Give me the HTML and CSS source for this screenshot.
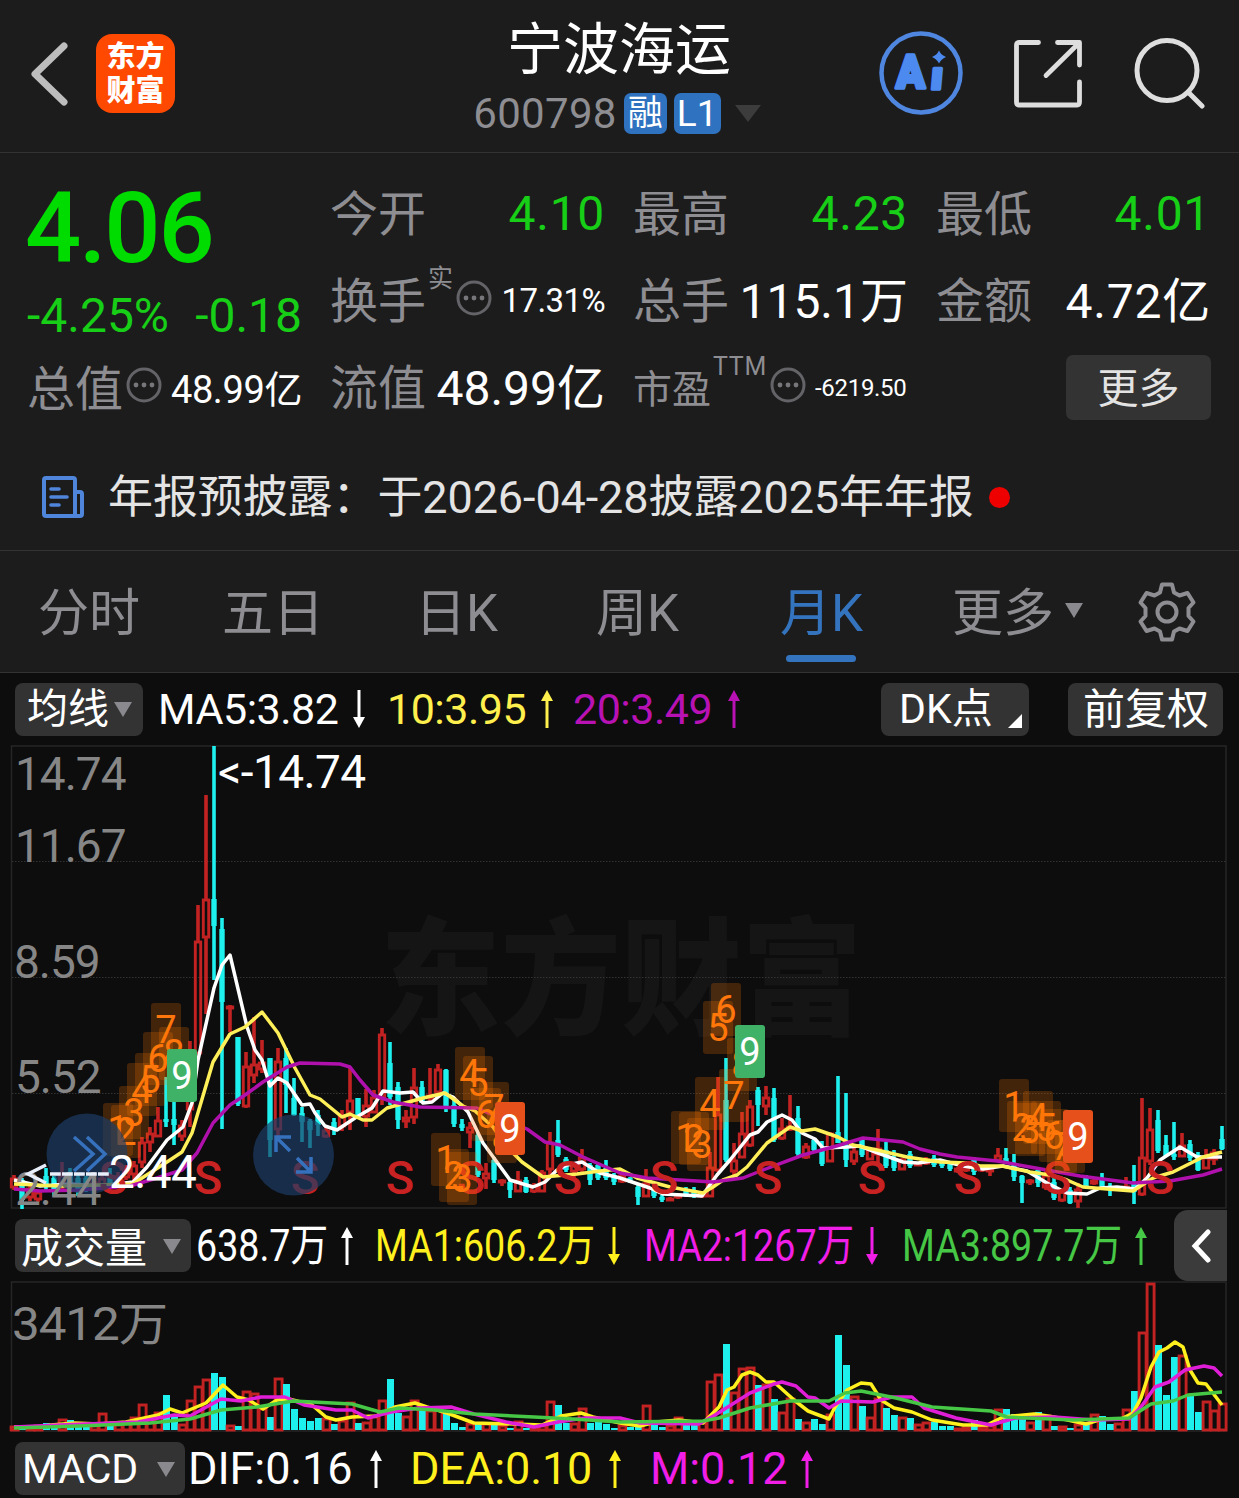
FILE: index.html
```html
<!doctype html>
<html lang="zh-CN">
  <head>
    <meta charset="utf-8">
    <meta name="viewport" content="width=device-width, initial-scale=1">
    <title>宁波海运 600798</title>
    <link rel="stylesheet" href="styles.css">
  </head>
  <body>
    <svg width="0" height="0" class="defs">
      <symbol id="arrow" viewBox="0 0 12 38">
        <path d="M6 8V38" stroke="currentColor" stroke-width="3"/>
        <path d="M6 0L12 11H0Z" fill="currentColor"/>
      </symbol>
      <symbol id="more-dots" viewBox="0 0 36 36">
        <circle cx="18" cy="18" r="16" fill="none" stroke="#646468" stroke-width="3"/>
        <circle cx="10" cy="18" r="2.4" fill="#77777b"/>
        <circle cx="18" cy="18" r="2.4" fill="#77777b"/>
        <circle cx="26" cy="18" r="2.4" fill="#77777b"/>
      </symbol>
    </svg>

    <header class="header">
      <div class="header-left">
        <svg class="back" viewBox="0 0 40 66"><path d="M35 5L6 33L35 61" fill="none" stroke="#bdbdbd" stroke-width="7" stroke-linecap="round" stroke-linejoin="round"/></svg>
        <div class="logo"><span>东方</span><span>财富</span></div>
      </div>
      <div class="header-title">
        <h1>宁波海运</h1>
        <div class="code-row">
          <span class="code">600798</span>
          <span class="tag tag-rong">融</span>
          <span class="tag tag-l1">L1</span>
          <i class="caret caret-dark"></i>
        </div>
      </div>
      <div class="header-right">
        <svg class="icon-ai" viewBox="0 0 84 84">
          <circle cx="42" cy="42" r="39.5" fill="none" stroke="#4f86e0" stroke-width="4.5"/>
          <text x="17" y="57" class="ai-a" textLength="29" lengthAdjust="spacingAndGlyphs">A</text>
          <text x="0" y="0" class="ai-i" transform="translate(51 58) skewX(-5)" textLength="12" lengthAdjust="spacingAndGlyphs">ı</text>
          <path d="M60 19.500Q62 24 67 26Q62 28 60 32.500Q58 28 53 26Q58 24 60 19.500Z" fill="#4c8af0"/>
        </svg>
        <svg class="icon-share" viewBox="0 0 70 70" fill="none" stroke="#dedede" stroke-width="4.8" stroke-linecap="round" stroke-linejoin="round">
          <path d="M25.500 4.500H6Q3.500 4.500 3.500 7V64Q3.500 67 6 67H64Q66.500 67 66.500 64V44"/>
          <path d="M44.500 4.500H66.500V27M65 6L33 37.500"/>
        </svg>
        <svg class="icon-search" viewBox="0 0 72 72" fill="none" stroke="#dedede" stroke-width="5" stroke-linecap="round">
          <circle cx="34" cy="33.500" r="30"/>
          <path d="M55 55L69 69"/>
        </svg>
      </div>
    </header>

    <section class="quote">
      <div class="price-box">
        <div class="price">4.06</div>
        <div class="change"><span>-4.25%</span><span>-0.18</span></div>
        <div class="stat stat-left"><label>总值</label><svg class="dots"><use href="#more-dots"/></svg><b class="mid">48.99亿</b></div>
      </div>
      <div class="stats">
        <div class="stat"><label>今开</label><b class="down">4.10</b></div>
        <div class="stat"><label>最高</label><b class="down">4.23</b></div>
        <div class="stat"><label>最低</label><b class="down">4.01</b></div>
        <div class="stat"><label>换手</label><sup>实</sup><svg class="dots"><use href="#more-dots"/></svg><b class="small">17.31%</b></div>
        <div class="stat"><label>总手</label><b class="cjk">115.1万</b></div>
        <div class="stat"><label>金额</label><b class="cjk wide">4.72亿</b></div>
        <div class="stat"><label>流值</label><b class="cjk">48.99亿</b></div>
        <div class="stat"><label class="short">市盈</label><sup class="ttm">TTM</sup><svg class="dots"><use href="#more-dots"/></svg><b class="tiny">-6219.50</b></div>
        <div class="stat stat-more"><button class="more">更多</button></div>
      </div>
    </section>

    <section class="notice">
      <svg class="icon-news" viewBox="0 0 42 42" fill="none" stroke="#5085dc" stroke-width="4" stroke-linejoin="round" stroke-linecap="round">
        <path d="M33 40H4Q2 40 2 38V4Q2 2 4 2H31Q33 2 33 4V40H38Q40 40 40 38V18Q40 16 38 16H33"/>
        <path d="M9 13H17M9 21H25M9 29H17" stroke-width="3.600"/>
      </svg>
      <span class="notice-text">年报预披露：于2026-04-28披露2025年年报</span>
      <i class="red-dot"></i>
    </section>

    <nav class="tabs">
      <a>分时</a>
      <a>五日</a>
      <a>日K</a>
      <a>周K</a>
      <a class="active">月K</a>
      <a>更多<i class="caret"></i></a>
      <svg class="icon-gear" viewBox="0 0 60 60" fill="none" stroke="#8d8d92" stroke-width="4" stroke-linejoin="round">
        <path d="M25 2.500H35L37 10.500L42.500 13.500L50.500 11L56.500 20.500L51.500 26V34L56.500 39.500L50.500 49L42.500 46.500L37 49.500L35 57.500H25L23 49.500L17.500 46.500L9.500 49L3.500 39.500L8.500 34V26L3.500 20.500L9.500 11L17.500 13.500L23 10.500Z"/>
        <circle cx="30" cy="30" r="9.500"/>
      </svg>
    </nav>

    <main class="charts">
      <div class="bar bar-ma">
        <button class="pick">均线<i class="caret"></i></button>
        <span class="white">MA5:3.82</span><svg class="arrow flip white"><use href="#arrow"/></svg>
        <span class="yellow-soft">10:3.95</span><svg class="arrow yellow-soft"><use href="#arrow"/></svg>
        <span class="purple">20:3.49</span><svg class="arrow purple"><use href="#arrow"/></svg>
        <button class="pick dk">DK点<i class="corner"></i></button>
        <button class="pick fq">前复权</button>
      </div>

      <svg id="k-chart" width="1239" height="465" viewBox="0 745 1239 465">
        <text class="watermark" x="380" y="1025" textLength="482" lengthAdjust="spacingAndGlyphs">东方财富</text>
        <path class="frame" d="M11.500 1208V746H1226V1208Z"/>
        <path class="dotted" d="M12 861.500H1226M12 977.500H1226M12 1093.500H1226"/>
        <g class="axis">
          <text x="15" y="790">14.74</text>
          <text x="15" y="862">11.67</text>
          <text x="14" y="978">8.59</text>
          <text x="15" y="1093">5.52</text>
        </g>
        <g id="candles"></g>
        <g id="ma-lines"></g>
        <g id="sells"></g>
        <g id="marks"></g>
        <g class="round-btn">
          <circle cx="87" cy="1154" r="40.500"/>
          <path d="M74 1137L93 1154L74 1171M87 1137L105 1154L87 1171"/>
          <circle cx="293.500" cy="1155" r="40.500"/>
          <path d="M290 1151L276 1137M276 1152V1137H291M297 1158L311 1172M311 1157V1172H296"/>
        </g>
        <text class="axis" x="15" y="1205">2.44</text>
        <text class="peak" x="218" y="788">&lt;-14.74</text>
        <path class="low-line" d="M46 1165L28 1174L46 1183"/>
        <path class="low-line dashes" d="M50 1174H109"/>
        <text class="peak" x="109" y="1188">2.44</text>
      </svg>

      <div class="bar bar-vol">
        <button class="pick">成交量<i class="caret"></i></button>
        <span class="white narrow">638.7万</span><svg class="arrow white"><use href="#arrow"/></svg>
        <span class="yellow narrow">MA1:606.2万</span><svg class="arrow flip yellow"><use href="#arrow"/></svg>
        <span class="magenta narrow">MA2:1267万</span><svg class="arrow flip magenta"><use href="#arrow"/></svg>
        <span class="green narrow">MA3:897.7万</span><svg class="arrow green"><use href="#arrow"/></svg>
        <button class="collapse"><svg viewBox="0 0 20 34"><path d="M17 3L4 17L17 31" fill="none" stroke="#fff" stroke-width="5" stroke-linecap="round"/></svg></button>
      </div>

      <svg id="vol-chart" width="1239" height="151" viewBox="0 1281 1239 151">
        <path class="frame" d="M11.500 1431V1282H1226V1431Z"/>
        <text class="axis" x="12" y="1340" textLength="155" lengthAdjust="spacingAndGlyphs">3412万</text>
        <g id="volumes"></g>
        <g id="vol-lines"></g>
      </svg>

      <div class="bar bar-macd">
        <button class="pick">MACD<i class="caret"></i></button>
        <span class="white">DIF:0.16</span><svg class="arrow white"><use href="#arrow"/></svg>
        <span class="yellow">DEA:0.10</span><svg class="arrow yellow"><use href="#arrow"/></svg>
        <span class="magenta">M:0.12</span><svg class="arrow magenta"><use href="#arrow"/></svg>
      </div>
    </main>

    <script src="chart.js"></script>
  </body>
</html>
```

FILE: styles.css
```css
* {
  box-sizing: border-box;
}

body {
  margin: 0;
  width: 1239px;
  height: 1498px;
  overflow: hidden;
  background: #0d0d0d;
  color: #fff;
  font-family: Roboto, "Noto Sans CJK SC", sans-serif;
}

.defs {
  display: block;
}

svg {
  flex: none;
}

button {
  border: 0;
  padding: 0;
  color: inherit;
  font-family: inherit;
}

.caret {
  border: 9px solid transparent;
  border-top: 15px solid #8a8a8e;
  border-bottom: 0;
}

/* header */
.header {
  display: grid;
  grid-template-columns: 467px 300px 1fr;
  height: 153px;
  background: #1c1c1c;
  border-bottom: 1px solid #333;
}

.header-left {
  display: flex;
  align-items: flex-start;
  padding: 34px 0 0 29px;
}

.back {
  width: 40px;
  height: 66px;
  margin: 7px 27px 0 0;
}

.logo {
  display: flex;
  flex-direction: column;
  align-items: center;
  width: 79px;
  height: 79px;
  padding-top: 6px;
  border-radius: 16px;
  background: #ff4800;
  font-size: 29px;
  font-weight: 900;
  line-height: 34px;
}

.header-title {
  display: flex;
  flex-direction: column;
  align-items: center;
}

h1 {
  margin: 15px 0 0 4px;
  font-size: 56px;
  font-weight: 400;
  line-height: 70px;
}

.code-row {
  display: flex;
  align-items: center;
  height: 42px;
  margin-top: 7px;
}

.code {
  margin-right: 7px;
  color: #8d8d92;
  font-size: 42px;
  letter-spacing: .3px;
}

.tag {
  width: 43px;
  height: 41px;
  margin-right: 7px;
  border-radius: 7px;
  background: #2f72c0;
  text-align: center;
  font-size: 37px;
  line-height: 41px;
}

.tag-rong {
  font-size: 35px;
}

.tag-l1 {
  width: 47px;
  margin-right: 14px;
}

.caret-dark {
  border-width: 17px 13px 0;
  border-top-color: #3c3c3c;
}

.header-right {
  display: flex;
  align-items: flex-start;
  padding: 31px 0 0 112px;
}

.icon-ai {
  width: 84px;
  height: 84px;
}

.ai-a, .ai-i {
  fill: #4c8af0;
  stroke: #4c8af0;
  stroke-width: 3.5px;
  stroke-linejoin: round;
  font-size: 46px;
  font-weight: 900;
}

.ai-i {
  font-family: "Open Sans", sans-serif;
  font-size: 37px;
  font-weight: 800;
}

.icon-share {
  width: 70px;
  height: 70px;
  margin: 7px 0 0 50px;
}

.icon-search {
  width: 72px;
  height: 72px;
  margin: 6px 0 0 50px;
}

/* quote */
.quote {
  display: grid;
  grid-template-columns: 274px 880px;
  column-gap: 29px;
  height: 291px;
  padding: 17px 0 0 28px;
  background: #1c1c1c;
}

.price {
  height: 116px;
  margin-left: -3px;
  color: #00dc00;
  font-size: 99px;
  font-weight: 500;
  line-height: 116px;
  letter-spacing: -2.2px;
}

.change {
  display: flex;
  justify-content: space-between;
  height: 58px;
  margin-left: -1px;
  color: #17cf17;
  font-size: 48px;
  line-height: 59px;
}

.stats {
  display: grid;
  grid-template-columns: repeat(3, 274px);
  grid-auto-rows: 87px;
  column-gap: 29px;
}

.stat {
  display: flex;
  align-items: center;
  height: 87px;
  font-size: 48px;
}

.stat label {
  margin: -7px 0 0 -1px;
  color: #8d8d92;
}

.stat-left label {
  margin-top: -5px;
}

.stat label.short {
  margin-top: -3px;
  font-size: 39px;
}

.stat b {
  margin-left: auto;
  font-weight: 400;
}

.stat .cjk {
  margin-top: -7px;
}

.stat .down {
  letter-spacing: .7px;
  color: #17cf17;
}

.stat .wide {
  letter-spacing: .8px;
}

.stat .small {
  font-size: 33px;
  letter-spacing: -.6px;
}

.stat .mid {
  margin-top: -2px;
  font-size: 38px;
  letter-spacing: -.4px;
}

.stat .tiny {
  margin-left: 9px;
  font-size: 24px;
  letter-spacing: -.3px;
}

.stat sup {
  align-self: flex-start;
  margin: 4px 0 0 2px;
  color: #8d8d92;
  font-size: 25px;
  line-height: 36px;
}

.stat .ttm {
  margin-top: 5px;
  letter-spacing: .7px;
}

.dots {
  width: 36px;
  height: 36px;
  margin-top: -5px;
  margin-left: 3px;
}

.stat-more {
  justify-content: flex-end;
}

.more {
  width: 145px;
  height: 65px;
  padding-bottom: 7px;
  border-radius: 7px;
  background: #333;
  color: #e3e3e3;
  font-size: 41px;
}

/* notice */
.notice {
  display: flex;
  align-items: center;
  height: 107px;
  padding: 0 0 0 42px;
  border-bottom: 1px solid #333;
  background: #1c1c1c;
}

.icon-news {
  width: 42px;
  height: 42px;
  margin-right: 24px;
}

.notice-text {
  margin-top: -8px;
  color: #e4e4e4;
  font-size: 45px;
  letter-spacing: -.1px;
}

.red-dot {
  width: 21px;
  height: 21px;
  margin-left: 15px;
  border-radius: 50%;
  background: #ee0000;
}

/* period tabs */
.tabs {
  display: grid;
  grid-template-columns: 184px 193px 181px 184px 172px 185px 60px;
  align-items: center;
  height: 122px;
  padding-left: 38px;
  border-bottom: 1px solid #333;
  background: #1c1c1c;
}

.tabs a {
  position: relative;
  padding-top: 5px;
  color: #8d8d92;
  font-size: 51px;
  line-height: 116px;
}

.tabs .caret {
  display: inline-block;
  margin: 0 0 13px 11px;
}

.tabs .active {
  color: #3474be;
}

.tabs .active::after {
  content: "";
  position: absolute;
  left: 6px;
  bottom: 10px;
  width: 70px;
  height: 7px;
  border-radius: 4px;
  background: #3474be;
}

.icon-gear {
  width: 60px;
  height: 60px;
}

/* indicator bars */
.bar {
  display: grid;
  align-items: center;
  padding-left: 15px;
  font-size: 44px;
  white-space: nowrap;
}

.bar-ma {
  grid-template-columns: 143px 195px 34px 154px 32px 155px 153px 187px 155px;
  height: 72px;
}

.bar-ma span {
  font-size: 43px;
  letter-spacing: -.5px;
}

.bar-vol {
  grid-template-columns: 181px 145px 34px 233px 36px 222px 36px 233px 39px 53px;
  height: 71px;
}

.bar-macd {
  grid-template-columns: 173px 182px 40px 199px 41px 151px 12px;
  height: 73px;
  font-size: 45px;
}

.bar-macd span {
  letter-spacing: -.1px;
}

.pick {
  display: flex;
  align-items: center;
  justify-content: space-between;
  width: 128px;
  height: 53px;
  padding: 1px 11px 0 12px;
  border-radius: 8px;
  background: #333;
  font-size: 41px;
  line-height: 53px;
}

.dk {
  width: 148px;
  padding: 1px 7px 0 18px;
}

.corner {
  align-self: flex-end;
  margin-bottom: 8px;
  border-left: 14px solid transparent;
  border-bottom: 14px solid #fff;
}

.fq {
  width: 155px;
  padding-left: 15px;
  font-size: 42px;
}

.bar-vol .pick {
  width: 176px;
  padding: 5px 10px 0 6px;
  font-size: 42px;
}

.bar-vol .caret {
  margin-top: -3px;
}

.bar-macd .pick {
  width: 170px;
  padding: 1px 10px 0 7px;
}

.narrow {
  margin-top: -8px;
  transform: scaleX(.855);
  transform-origin: left;
}

.arrow {
  width: 12px;
  height: 38px;
}

.flip {
  transform: scaleY(-1);
}

.collapse {
  display: flex;
  align-items: center;
  justify-content: center;
  width: 53px;
  height: 71px;
  border-radius: 14px 0 0 14px;
  background: #3b3b3b;
}

.collapse svg {
  width: 20px;
  height: 34px;
}

.white { color: #fff; }
.yellow-soft { color: #fff04d; }
.yellow { color: #fff01e; }
.purple { color: #b812b4; }
.magenta { color: #f01ee6; }
.green { color: #46c846; }

/* charts */
#k-chart, #vol-chart {
  display: block;
}

#k-chart {
  overflow: visible;
}

.frame {
  fill: none;
  stroke: #262626;
  stroke-width: 1.5;
}

.dotted {
  stroke: #333;
  stroke-dasharray: 1.5 1.5;
}

.watermark {
  fill: #151515;
  font-size: 127px;
  font-weight: 900;
}

.axis {
  fill: #868686;
  font-size: 46px;
  letter-spacing: -1px;
}

.peak {
  fill: #fff;
  font-size: 46px;
  letter-spacing: -.6px;
}

.low-line {
  fill: none;
  stroke: #e8eefa;
  stroke-width: 3.5;
}

.dashes {
  stroke-dasharray: 10.8 1.2;
}

.rise {
  fill: none;
  stroke: #c32222;
  stroke-width: 2.9;
}

.wick-rise { fill: #c32222; }
.fall { fill: #1ef0ee; }

.line {
  fill: none;
  stroke-width: 3.5;
  stroke-linejoin: round;
}

.line-5 { stroke: #fff; }
.line-10 { stroke: #fff05a; }
.line-20 { stroke: #b010ac; }
.vol-5 { stroke: #fff01e; }
.vol-10 { stroke: #e01ed8; }
.vol-20 { stroke: #46c846; }

.sell {
  fill: #c82222;
  font-size: 47px;
  font-weight: 500;
  text-anchor: middle;
}

.mark-box {
  fill: #ff7800;
  fill-opacity: .22;
}

.mark-box.top { fill: #e6501a; fill-opacity: 1; }
.mark-box.bottom { fill: #3fb268; fill-opacity: 1; }

.mark-num {
  fill: #ff760c;
  font-size: 38px;
  text-anchor: middle;
}

.mark-num.nine { fill: #fff; }

.round-btn circle {
  fill: #1c3c66;
  fill-opacity: .68;
}

.round-btn path {
  fill: none;
  stroke: #3671bd;
  stroke-width: 3.5;
}
```

FILE: chart.js
```js
// one row per month: colour, high, body top, body bottom, low (chart y), volume bar height
const months = [
  'r 1175 1178 1188 1190 4', 'c 1178 1180 1200 1209 2', 'r 1186 1188 1198 1201 2', 'r 1190 1192 1200 1202 5',
  'c 1168 1176 1186 1190 7', 'c 1176 1178 1190 1196 4', 'r 1162 1175 1188 1190 11', 'c 1168 1172 1186 1190 10',
  'c 1175 1178 1190 1196 5', 'c 1176 1178 1188 1192 5', 'r 1180 1182 1190 1192 5', 'r 1174 1178 1188 1190 17',
  'c 1168 1178 1186 1188 4', 'r 1172 1176 1184 1186 6', 'r 1165 1170 1178 1180 8', 'r 1161 1165 1175 1180 13',
  'r 1137 1142 1163 1168 26', 'r 1127 1133 1143 1152 12', 'r 1107 1120 1137 1137 18', 'c 1077 1119 1122 1127 35',
  'c 1102 1119 1125 1145 14', 'r 1120 1125 1137 1141 6', 'r 1041 1060 1110 1127 30', 'r 905 941 1054 1054 44',
  'r 795 899 938 1014 51', 'c 746 899 926 980 57', 'c 918 929 1002 1129 53', 'r 1005 1006 1008 1032 5',
  'c 1037 1037 1104 1106 4', 'r 1052 1066 1107 1108 39', 'r 1017 1064 1076 1083 37', 'r 1040 1062 1070 1073 22',
  'c 1058 1058 1140 1157 13', 'r 1048 1061 1130 1140 52', 'c 1048 1058 1085 1113 46', 'c 1078 1098 1115 1116 21',
  'c 1107 1113 1122 1142 12', 'c 1119 1121 1130 1148 9', 'c 1110 1115 1125 1136 12', 'r 1127 1130 1137 1138 12',
  'c 1118 1122 1130 1135 6', 'r 1110 1115 1127 1131 10', 'r 1067 1100 1113 1130 28', 'c 1098 1098 1116 1118 7',
  'r 1089 1105 1117 1127 8', 'r 1090 1097 1113 1113 14', 'r 1028 1034 1098 1105 30', 'c 1042 1063 1097 1105 51',
  'c 1082 1087 1120 1129 17', 'r 1110 1117 1122 1128 14', 'r 1068 1087 1118 1124 30', 'c 1081 1087 1103 1103 20',
  'r 1068 1095 1099 1103 20', 'r 1064 1069 1093 1094 22', 'c 1069 1070 1108 1112 20', 'c 1097 1105 1124 1127 7',
  'c 1119 1124 1128 1131 3', 'r 1122 1127 1133 1148 7', 'c 1132 1135 1175 1177 7', 'r 1163 1173 1179 1189 7',
  'c 1157 1160 1180 1183 8', 'r 1179 1180 1182 1186 5', 'c 1180 1182 1190 1198 2', 'r 1171 1180 1192 1192 9',
  'c 1177 1180 1192 1193 2', 'r 1183 1185 1192 1193 4', 'r 1170 1172 1192 1192 5', 'r 1132 1142 1170 1176 29',
  'c 1120 1140 1155 1157 25', 'c 1157 1159 1170 1172 7', 'r 1163 1165 1172 1180 7', 'r 1149 1157 1170 1175 22',
  'c 1163 1165 1180 1185 7', 'c 1163 1165 1178 1180 8', 'c 1160 1168 1178 1180 6', 'c 1173 1175 1182 1185 2',
  'r 1170 1175 1182 1183 5', 'c 1177 1178 1182 1183 3', 'c 1183 1187 1197 1205 4', 'r 1169 1183 1197 1197 25',
  'c 1188 1190 1196 1198 8', 'c 1195 1197 1200 1202 3', 'r 1197 1198 1200 1201 5', 'r 1193 1194 1198 1199 13',
  'c 1187 1190 1196 1197 5', 'c 1187 1190 1196 1198 5', 'r 1192 1194 1197 1198 8', 'r 1152 1167 1197 1197 49',
  'r 1077 1114 1171 1172 56', 'c 1058 1100 1160 1162 86', 'r 1143 1160 1172 1175 38', 'r 1112 1133 1158 1158 62',
  'r 1100 1106 1146 1147 63', 'c 1087 1090 1105 1126 45', 'r 1086 1097 1107 1115 46', 'c 1088 1098 1140 1142 31',
  'r 1118 1128 1139 1140 18', 'r 1095 1126 1130 1131 32', 'c 1106 1118 1154 1156 11', 'r 1143 1146 1158 1159 8',
  'c 1138 1140 1150 1151 11', 'c 1141 1150 1164 1166 6', 'r 1132 1133 1162 1162 16', 'c 1076 1132 1143 1143 95',
  'c 1093 1147 1160 1167 65', 'r 1147 1151 1162 1165 34', 'c 1137 1140 1155 1157 24', 'r 1148 1149 1160 1160 13',
  'r 1129 1148 1155 1165 32', 'c 1142 1150 1166 1168 22', 'c 1150 1158 1168 1171 15', 'r 1158 1159 1170 1170 13',
  'c 1151 1154 1166 1168 12', 'r 1162 1163 1165 1166 6', 'r 1157 1159 1164 1165 8', 'c 1155 1158 1165 1167 8',
  'c 1160 1161 1166 1168 4', 'c 1161 1163 1169 1171 4', 'r 1167 1168 1172 1173 2', 'r 1165 1166 1171 1172 3',
  'c 1157 1160 1172 1175 10', 'r 1165 1166 1171 1172 4', 'r 1168 1169 1172 1176 5', 'r 1148 1155 1161 1161 21',
  'c 1148 1158 1162 1163 21', 'c 1154 1163 1177 1181 16', 'c 1175 1176 1183 1203 11', 'r 1179 1180 1183 1185 8',
  'c 1168 1170 1183 1187 18', 'r 1170 1175 1188 1190 15', 'c 1178 1182 1198 1200 4', 'r 1190 1191 1201 1202 4',
  'c 1187 1190 1203 1204 2', 'r 1183 1189 1202 1208 6', 'c 1175 1177 1186 1187 7', 'r 1179 1180 1184 1185 16',
  'c 1173 1178 1186 1188 14', 'c 1183 1186 1190 1196 6', 'r 1186 1187 1189 1190 7', 'r 1177 1186 1189 1190 21',
  'c 1165 1184 1192 1204 39', 'r 1098 1157 1195 1196 98', 'r 1108 1129 1162 1165 147', 'c 1110 1120 1151 1153 85',
  'c 1135 1145 1156 1157 35', 'c 1122 1154 1157 1160 73', 'r 1133 1145 1157 1157 75', 'c 1140 1144 1158 1161 34',
  'c 1152 1155 1170 1171 18', 'r 1149 1157 1169 1169 29', 'r 1149 1152 1160 1165 20', 'c 1126 1139 1149 1150 27'
].map(row => row.split(' '));

const lines = {
  'line-5': '14,1180 40,1186 70,1184 100,1186 133,1182 147,1167 167,1140 183,1127 192,1103 198,1060 214,988 222,965 230,955 247,1027 255,1050 262,1060 270,1086 278,1078 287,1083 302,1105 310,1104 315,1113 325,1126 337,1130 355,1118 372,1108 383,1091 400,1093 413,1092 423,1103 432,1102 443,1093 453,1097 468,1112 483,1143 510,1180 533,1187 545,1182 557,1170 567,1165 582,1162 600,1173 620,1178 650,1188 663,1194 702,1196 717,1175 730,1160 750,1135 758,1132 767,1122 782,1115 792,1120 802,1133 815,1139 823,1148 847,1147 860,1146 878,1153 903,1162 918,1163 940,1160 963,1166 983,1169 1003,1166 1027,1171 1047,1183 1067,1193 1087,1194 1100,1188 1117,1187 1135,1189 1147,1178 1160,1160 1180,1147 1197,1157 1222,1157',
  'line-10': '14,1184 60,1186 133,1184 142,1178 167,1162 182,1152 192,1133 213,1062 230,1034 245,1027 262,1012 278,1033 295,1068 310,1095 320,1099 342,1117 350,1114 363,1120 372,1120 387,1108 423,1098 445,1093 463,1106 475,1111 493,1127 507,1147 522,1162 543,1177 577,1174 600,1171 620,1169 637,1178 670,1187 703,1193 713,1187 723,1180 737,1175 747,1167 767,1143 790,1127 802,1131 815,1129 838,1137 853,1145 877,1150 907,1157 940,1162 967,1163 980,1166 1002,1166 1030,1172 1050,1175 1067,1180 1083,1187 1107,1189 1133,1191 1153,1178 1173,1172 1203,1157 1222,1152',
  'line-20': '14,1189 40,1191 80,1190 130,1186 157,1178 182,1170 197,1153 213,1123 230,1105 245,1095 263,1082 287,1067 300,1063 340,1064 350,1067 360,1080 373,1095 393,1102 420,1107 477,1108 500,1118 527,1129 545,1142 560,1145 583,1157 620,1173 647,1178 697,1181 713,1182 743,1178 763,1170 803,1155 833,1147 863,1138 903,1142 920,1149 940,1154 957,1157 997,1161 1030,1167 1080,1176 1133,1183 1170,1181 1203,1175 1222,1169'
};

const volLines = {
  'vol-5': '14,1427 40,1427 51,1425 75,1423 99,1424 126,1422 158,1415 170,1409 182,1413 206,1403 223,1385 237,1397 249,1400 263,1409 277,1400 289,1399 312,1405 326,1417 336,1420 352,1417 376,1416 395,1407 415,1403 427,1407 447,1413 474,1423 514,1424 542,1425 561,1416 581,1413 593,1417 620,1423 640,1426 656,1422 679,1420 703,1423 719,1407 727,1390 734,1387 742,1375 750,1372 758,1375 766,1382 774,1382 794,1400 808,1411 829,1419 835,1407 847,1390 861,1383 871,1384 881,1400 894,1408 912,1412 932,1420 963,1425 987,1425 1003,1417 1034,1414 1054,1417 1086,1424 1102,1419 1121,1419 1133,1413 1141,1398 1151,1367 1159,1352 1167,1348 1175,1342 1183,1347 1190,1370 1198,1383 1206,1384 1222,1405',
  'vol-10': '14,1427 59,1425 138,1422 174,1415 190,1416 221,1399 241,1401 261,1397 285,1397 304,1405 336,1410 352,1410 368,1418 391,1412 419,1408 451,1407 474,1414 506,1422 534,1427 558,1422 585,1418 620,1418 640,1423 699,1424 715,1415 731,1405 750,1393 774,1384 782,1382 796,1386 808,1397 815,1398 829,1408 841,1401 873,1402 892,1397 912,1397 924,1408 956,1418 991,1425 1015,1418 1054,1417 1094,1420 1129,1419 1141,1407 1155,1387 1169,1382 1185,1370 1204,1366 1214,1368 1222,1376',
  'vol-20': '14,1428 79,1426 150,1423 190,1419 221,1410 257,1407 293,1401 352,1404 380,1412 399,1408 435,1410 474,1414 534,1417 573,1419 620,1422 703,1421 719,1418 750,1408 790,1401 829,1401 845,1393 861,1391 896,1398 932,1407 991,1411 1007,1417 1074,1420 1129,1418 1151,1404 1173,1401 1188,1395 1222,1392'
};

// nine-turn counts: digit, left, top
const marks = [
  [1, 103, 1103], [2, 111, 1105], [3, 119, 1086], [4, 127, 1063], [5, 135, 1053], [6, 143, 1032], [7, 151, 1003], [8, 159, 1027], [9, 167, 1049, 'bottom'],
  [1, 431, 1133], [2, 439, 1149], [3, 447, 1152], [4, 455, 1047], [5, 463, 1056], [6, 471, 1088], [7, 479, 1082], [8, 487, 1110], [9, 495, 1102, 'top'],
  [1, 671, 1111], [2, 679, 1112], [3, 687, 1118], [4, 695, 1077], [5, 703, 1001], [6, 711, 983], [7, 719, 1069], [8, 727, 1038], [9, 735, 1025, 'bottom'],
  [1, 999, 1079], [2, 1007, 1101], [3, 1015, 1103], [4, 1023, 1091], [5, 1031, 1101], [6, 1039, 1109], [7, 1047, 1120], [8, 1055, 1120], [9, 1063, 1110, 'top']
];
const sells = [113, 208, 305, 400, 471, 568, 664, 768, 872, 968, 1057, 1160];

function rect(cls, x, y, w, h, rx = 0) {
  return `<rect class="${cls}" x="${x}" y="${y}" width="${w}" height="${h}" rx="${rx}"/>`;
}

function fill(id, html) {
  document.getElementById(id).innerHTML = html;
}

let candles = '';
let volumes = '';
months.forEach(function(row, i) {
  const x = 14 + 8 * i;
  const [high, top, bottom, low, vol] = row.slice(1).map(Number);
  if (row[0] === 'r') {
    candles += rect('wick-rise', x - 1.8, high, 3.6, top - high);
    candles += rect('wick-rise', x - 1.8, bottom, 3.6, low - bottom);
    candles += rect('rise', x - 2.7, top + 1, 5.4, Math.max(bottom - top - 2, 1));
  } else {
    candles += rect('fall', x - 1.8, high, 3.6, low - high);
    candles += rect('fall', x - 2.7, top, 5.4, bottom - top);
  }
  if (row[0] === 'r' || i === months.length - 1) {
    volumes += rect('rise', x - 2.9, 1431 - vol, 7, Math.max(vol - 1, 1));
  } else {
    volumes += rect('fall', x - 3, 1430 - vol, 7, vol);
  }
});
fill('candles', candles);
fill('volumes', volumes);

function polylines(set) {
  return Object.keys(set).map(key => `<polyline class="line ${key}" points="${set[key]}"/>`).join('');
}
fill('ma-lines', polylines(lines));
fill('vol-lines', polylines(volLines));

fill('sells', sells.map(x => `<text class="sell" x="${x}" y="1194">S</text>`).join(''));
fill('marks', marks.map(([num, x, y, side]) =>
  rect('mark-box ' + (side || ''), x, y, 30, 53, 3) +
  `<text class="mark-num ${side ? 'nine' : ''}" x="${x + 15}" y="${y + 40}">${num}</text>`
).join(''));
```
